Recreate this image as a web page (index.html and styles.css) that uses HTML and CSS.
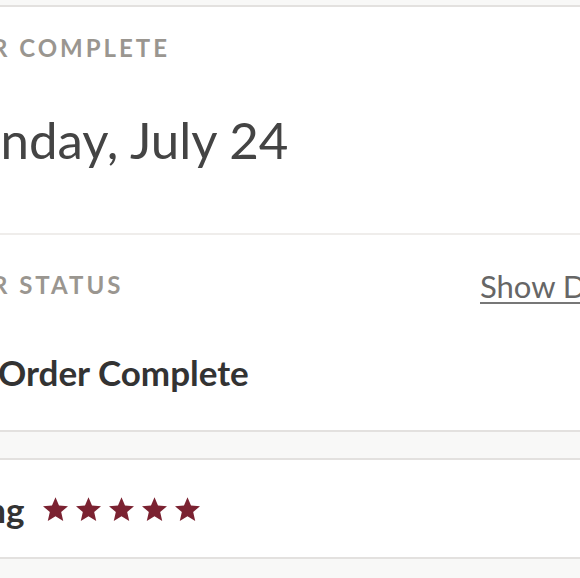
FILE: index.html
```html
<!DOCTYPE html>
<html lang="en">
<head>
<meta charset="utf-8">
<title>Order</title>
<link rel="stylesheet" href="styles.css">
</head>
<body>
<div class="page">
  <div class="strip strip-top"></div>
  <section class="card card-order">
    <div class="block block-date">
      <div class="label label-complete">ORDER COMPLETE</div>
      <div class="date">Sunday, July 24</div>
    </div>
    <div class="block block-status">
      <div class="status-head">
        <div class="label label-status">ORDER STATUS</div>
        <a class="details-link" href="#">Show Details</a>
      </div>
      <div class="status-value">Order Complete</div>
    </div>
  </section>
  <div class="strip strip-mid"></div>
  <section class="card card-rating">
    <div class="rating-row">
      <span class="rating-label">Rating</span>
      <span class="stars">
        <svg class="star" viewBox="2 2 20 19"><path d="M12 17.27L18.18 21l-1.64-7.03L22 9.24l-7.19-.61L12 2 9.19 8.63 2 9.24l5.46 4.73L5.82 21z"/></svg>
        <svg class="star" viewBox="2 2 20 19"><path d="M12 17.27L18.18 21l-1.64-7.03L22 9.24l-7.19-.61L12 2 9.19 8.63 2 9.24l5.46 4.73L5.82 21z"/></svg>
        <svg class="star" viewBox="2 2 20 19"><path d="M12 17.27L18.18 21l-1.64-7.03L22 9.24l-7.19-.61L12 2 9.19 8.63 2 9.24l5.46 4.73L5.82 21z"/></svg>
        <svg class="star" viewBox="2 2 20 19"><path d="M12 17.27L18.18 21l-1.64-7.03L22 9.24l-7.19-.61L12 2 9.19 8.63 2 9.24l5.46 4.73L5.82 21z"/></svg>
        <svg class="star" viewBox="2 2 20 19"><path d="M12 17.27L18.18 21l-1.64-7.03L22 9.24l-7.19-.61L12 2 9.19 8.63 2 9.24l5.46 4.73L5.82 21z"/></svg>
      </span>
    </div>
  </section>
  <div class="strip strip-bottom"></div>
</div>
</body>
</html>
```
FILE: styles.css
```css
html, body {
  margin: 0;
  padding: 0;
  background: #ffffff;
  overflow: hidden;
}

body {
  font-family: Lato, "Noto Sans", sans-serif;
  color: #333333;
}

.page {
  width: 580px;
  height: 578px;
  overflow: hidden;
  background: #f8f8f7;
}

.strip {
  background: #f8f8f7;
}

.strip-top {
  height: 5px;
}

.strip-mid {
  height: 26px;
}

.strip-bottom {
  height: 20px;
}

.card {
  background: #ffffff;
  border-top: 2px solid #e3e1df;
  border-bottom: 2px solid #e3e1df;
}

.block-date {
  padding-top: 27px;
  height: 226px;
  box-sizing: border-box;
}

.label {
  font-size: 24px;
  line-height: 28px;
  font-weight: 700;
  letter-spacing: 3px;
  color: #9a9690;
  white-space: nowrap;
}

.label-complete {
  margin-left: -87px;
}

.date {
  margin-top: 50px;
  margin-left: -55px;
  font-size: 51px;
  line-height: 56px;
  font-weight: 400;
  color: #444444;
  white-space: nowrap;
}

.block-status {
  border-top: 2px solid #efedeb;
  padding-top: 36px;
  height: 197px;
  box-sizing: border-box;
}

.status-head {
  display: grid;
  grid-template-columns: 567px auto;
  align-items: start;
  margin-left: -87px;
  white-space: nowrap;
}

.details-link {
  margin-top: -3px;
  font-size: 31px;
  line-height: 36px;
  color: #666666;
  text-decoration: underline;
  text-decoration-color: #777777;
  text-decoration-thickness: 2px;
  text-underline-offset: 4px;
  white-space: nowrap;
}

.status-value {
  margin-top: 48px;
  margin-left: -2px;
  font-size: 35px;
  line-height: 40px;
  font-weight: 700;
  color: #333333;
  white-space: nowrap;
}

.card-rating {
  height: 101px;
  box-sizing: border-box;
}

.rating-row {
  display: flex;
  align-items: center;
  gap: 20px;
  height: 97px;
  margin-left: -76px;
}

.rating-label {
  font-size: 35px;
  font-weight: 700;
  color: #333333;
  white-space: nowrap;
}

.stars {
  display: flex;
  gap: 8px;
  margin-left: -2px;
}

.star {
  width: 25px;
  height: 24px;
  fill: #7b2231;
}
```
